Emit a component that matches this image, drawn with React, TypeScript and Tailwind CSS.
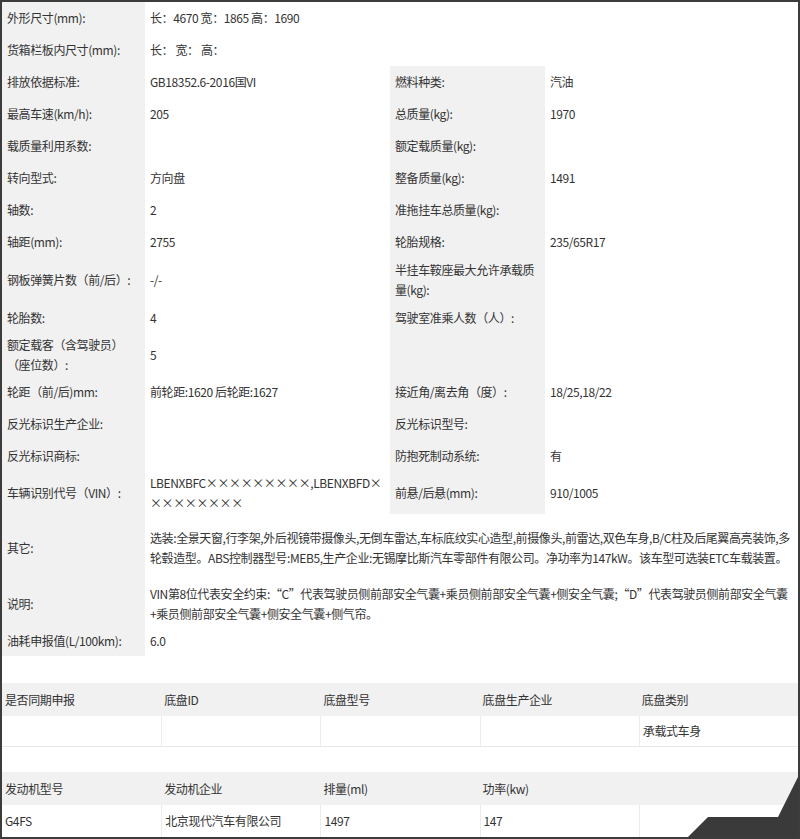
import React from "react";

type R = { a: string; b?: string; c?: string; d?: string; full?: boolean; h: number };
const rows: R[] = [
  { a: "外形尺寸(mm):", b: "长：4670 宽：1865 高：1690", full: true, h: 32 },
  { a: "货箱栏板内尺寸(mm):", b: "长：  宽：  高：", full: true, h: 32 },
  { a: "排放依据标准:", b: "GB18352.6-2016国VI", c: "燃料种类:", d: "汽油", h: 32 },
  { a: "最高车速(km/h):", b: "205", c: "总质量(kg):", d: "1970", h: 32 },
  { a: "载质量利用系数:", b: "", c: "额定载质量(kg):", d: "", h: 32 },
  { a: "转向型式:", b: "方向盘", c: "整备质量(kg):", d: "1491", h: 32 },
  { a: "轴数:", b: "2", c: "准拖挂车总质量(kg):", d: "", h: 32 },
  { a: "轴距(mm):", b: "2755", c: "轮胎规格:", d: "235/65R17", h: 32 },
  { a: "钢板弹簧片数（前/后）:", b: "-/-", c: "半挂车鞍座最大允许承载质量(kg):", d: "", h: 44 },
  { a: "轮胎数:", b: "4", c: "驾驶室准乘人数（人）:", d: "", h: 32 },
  { a: "额定载客（含驾驶员）（座位数）:", b: "5", c: "", d: "", h: 42 },
  { a: "轮距（前/后)mm:", b: "前轮距:1620 后轮距:1627", c: "接近角/离去角（度）:", d: "18/25,18/22", h: 32 },
  { a: "反光标识生产企业:", b: "", c: "反光标识型号:", d: "", h: 32 },
  { a: "反光标识商标:", b: "", c: "防抱死制动系统:", d: "有", h: 32 },
  { a: "车辆识别代号（VIN）:", b: "LBENXBFC×××××××××,LBENXBFD×××××××××", c: "前悬/后悬(mm):", d: "910/1005", h: 42 },
  { a: "其它:", b: "选装:全景天窗,行李架,外后视镜带摄像头,无倒车雷达,车标底纹实心造型,前摄像头,前雷达,双色车身,B/C柱及后尾翼高亮装饰,多轮毂造型。ABS控制器型号:MEB5,生产企业:无锡摩比斯汽车零部件有限公司。净功率为147kW。该车型可选装ETC车载装置。", full: true, h: 68 },
  { a: "说明:", b: "VIN第8位代表安全约束:“C”代表驾驶员侧前部安全气囊+乘员侧前部安全气囊+侧安全气囊;“D”代表驾驶员侧前部安全气囊+乘员侧前部安全气囊+侧安全气囊+侧气帘。", full: true, h: 44 },
  { a: "油耗申报值(L/100km):", b: "6.0", full: true, h: 30 },
];

const font = { fontFamily: '"Noto Sans CJK SC", "Noto Sans", sans-serif' };

function Cell({ t, grey, w, h }: { t?: string; grey?: boolean; w: string; h: number }) {
  return (
    <div
      className={`${w} flex items-center px-[5px] text-[12px] tracking-[-0.4px] leading-[20px] text-[#333] break-all ${grey ? "bg-[#f1f1f1]" : "bg-white"}`}
      style={{ minHeight: h }}
    >
      <span>{t}</span>
    </div>
  );
}

export default function App() {
  return (
    <div className="w-[800px] h-[839px] bg-white border-2 border-[#3c3c3c] overflow-hidden relative" style={font}>
      <div className="flex flex-col">
        {rows.map((r, i) => (
          <div key={i} className="flex border-b border-[#e6e6e6]" style={{ height: r.h }}>
            <Cell t={r.a} grey w="w-[143px] shrink-0" h={r.h} />
            {r.full ? (
              <Cell t={r.b} w="flex-1" h={r.h} />
            ) : (
              <>
                <Cell t={r.b} w="w-[245px] shrink-0" h={r.h} />
                <Cell t={r.c} grey w="w-[155px] shrink-0" h={r.h} />
                <Cell t={r.d} w="flex-1" h={r.h} />
              </>
            )}
          </div>
        ))}
      </div>
      <div className="h-[27px]" />
      <div className="grid grid-cols-5 bg-[#f1f1f1] h-[33px]">
        {["是否同期申报", "底盘ID", "底盘型号", "底盘生产企业", "底盘类别"].map((t) => (
          <div key={t} className="flex items-center px-[3px] text-[12px] tracking-[-0.4px] text-[#333]">{t}</div>
        ))}
      </div>
      <div className="grid grid-cols-5 h-[31px] border-b border-[#e6e6e6]">
        {["", "", "", "", "承载式车身"].map((t, i) => (
          <div key={i} className={`flex items-center px-[3px] text-[12px] tracking-[-0.4px] text-[#333] ${i > 0 ? "border-l border-[#ececec]" : ""}`}>{t}</div>
        ))}
      </div>
      <div className="h-[25px]" />
      <div className="grid grid-cols-5 bg-[#f1f1f1] h-[33px]">
        {["发动机型号", "发动机企业", "排量(ml)", "功率(kw)", ""].map((t, i) => (
          <div key={i} className="flex items-center px-[3px] text-[12px] tracking-[-0.4px] text-[#333]">{t}</div>
        ))}
      </div>
      <div className="grid grid-cols-5 h-[32px]">
        {["G4FS", "北京现代汽车有限公司", "1497", "147", ""].map((t, i) => (
          <div key={i} className={`flex items-center px-[3px] text-[12px] tracking-[-0.4px] text-[#333] ${i > 0 ? "border-l border-[#ececec]" : ""}`}>{t}</div>
        ))}
      </div>
      <svg className="absolute right-0 bottom-0" width="110" height="60" viewBox="0 0 110 60">
        <polygon points="110,0 110,60 0,60 20,40 90,40" fill="#3a3a3a" />
      </svg>
    </div>
  );
}
